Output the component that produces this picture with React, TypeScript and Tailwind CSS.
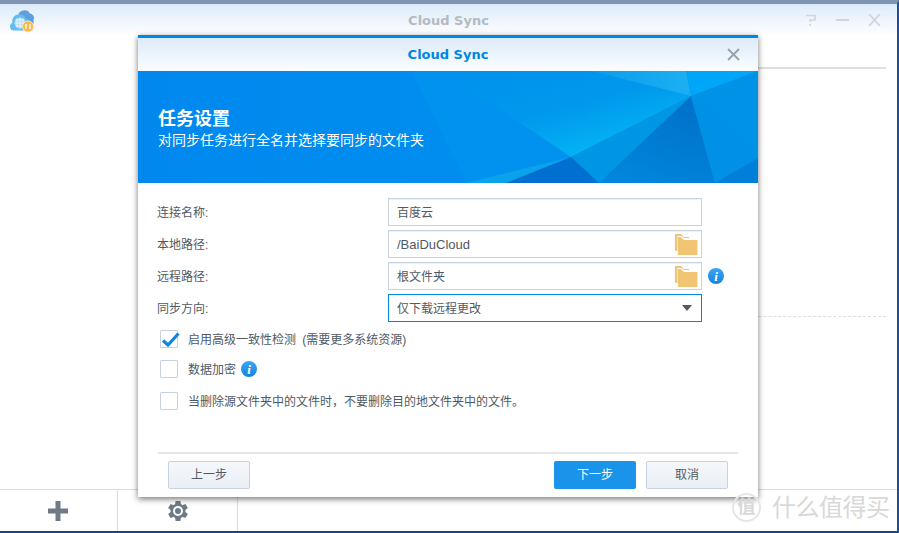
import clsx from 'clsx'

const cjk = "font-['Liberation_Sans','Noto_Sans_CJK_SC',sans-serif]"

function FolderIcon() {
  return (
    <svg width="23" height="21" viewBox="0 0 23 21" className="shrink-0">
      <path d="M0 0h6l3 3h5v1H9L6.500 2H2.500v15H0z" fill="#f0c674" />
      <path d="M3 3h3l3 3h13.500v15H3z" fill="#f0c674" />
    </svg>
  )
}

function InfoIcon() {
  return (
    <span className="flex h-4 w-4 shrink-0 items-center justify-center rounded-full bg-gradient-to-b from-[#3aa5f5] to-[#1583dd] font-['Liberation_Serif',serif] text-[13px] leading-none font-bold text-white italic">
      i
    </span>
  )
}

function GearIcon() {
  return (
    <svg width="20" height="20" viewBox="0 0 20 20" fill="#6e7b87">
      {[0, 60, 120, 180, 240, 300].map((deg) => (
        <path key={deg} d="M7.600 0h4.800l.6 4h-6z" transform={`rotate(${deg} 10 10)`} />
      ))}
      <circle cx="10" cy="10" r="7.500" />
      <circle cx="10" cy="10" r="5" fill="#fff" />
      <circle cx="10" cy="10" r="3" />
    </svg>
  )
}

function Field({ label, value, folder, info, valueClass }: { label: string; value: string; folder?: boolean; info?: boolean; valueClass?: string }) {
  return (
    <div className="flex h-7 items-center">
      <span className="w-[231px] shrink-0 pt-px text-xs text-[#505a64]">{label}</span>
      <div className="flex h-7 w-[314px] shrink-0 items-center justify-between border border-[#c7d2e0] pr-[3px] pl-2 text-xs text-[#505a64] shadow-[inset_0_1px_0_#eef2f7]">
        <span className={clsx('pt-px', valueClass)}>{value}</span>
        {folder && <FolderIcon />}
      </div>
      {info && (
        <span className="ml-[6px]">
          <InfoIcon />
        </span>
      )}
    </div>
  )
}

function Check({ label, checked, info }: { label: string; checked?: boolean; info?: boolean }) {
  return (
    <div className="flex h-[18px] items-center">
      <span className="relative h-[18px] w-[18px] shrink-0 rounded-[1px] border border-[#c7d2e0] bg-white">
        {checked && (
          <svg width="20" height="18" viewBox="0 0 20 18" className="absolute top-0 left-0">
            <path d="M2 9.500l5 4.500L17.500 2.500" fill="none" stroke="#0f86e0" strokeWidth="3.200" />
          </svg>
        )}
      </span>
      <span className="ml-[10px] pt-px text-xs text-[#505a64] [word-spacing:3px]">{label}</span>
      {info && (
        <span className="ml-[5px]">
          <InfoIcon />
        </span>
      )}
    </div>
  )
}

function Banner() {
  return (
    <div className="relative h-28 shrink-0 bg-gradient-to-r from-[#0088ee] to-[#0092ee]">
      <svg width="620" height="112" viewBox="0 0 620 112" className="absolute inset-0">
        <defs>
          <linearGradient id="lit" x1="0.100" y1="0" x2="0.800" y2="0.900">
            <stop offset="0" stopColor="#0092ee" />
            <stop offset="0.500" stopColor="#0098ec" />
            <stop offset="1" stopColor="#04b8f6" />
          </linearGradient>
          <linearGradient id="top" x1="0" y1="0" x2="1" y2="0">
            <stop offset="0" stopColor="#0a9cec" />
            <stop offset="1" stopColor="#1cb0f2" />
          </linearGradient>
          <linearGradient id="dark" x1="0.800" y1="0" x2="0.300" y2="1">
            <stop offset="0" stopColor="#0070c8" />
            <stop offset="1" stopColor="#0086dc" />
          </linearGradient>
        </defs>
        <path d="M273 0H620V112H328z" fill="#0092ee" />
        <path d="M305 0H453L553 25 433 86z" fill="url(#lit)" />
        <path d="M453 0H548L553 25z" fill="url(#top)" />
        <path d="M548 0H620L553 25z" fill="#00a6f8" />
        <path d="M553 25L620 0V87z" fill="#0092e6" />
        <path d="M328 112L433 86 368 112z" fill="#0aa2ea" />
        <path d="M433 86L553 25 461 112z" fill="#0096e6" />
        <path d="M553 25L461 112H577z" fill="url(#dark)" />
        <path d="M553 25L620 87 577 112z" fill="#0090e6" />
        <path d="M577 112L620 87V112z" fill="#007fd8" />
        <path d="M433 86L461 112H368z" fill="#0070d0" />
      </svg>
      <div className="relative pt-[37px] pl-5 text-white">
        <div className="text-[18px] leading-[23px] font-bold">任务设置</div>
        <div className="text-[14px] leading-[18px]">对同步任务进行全名并选择要同步的文件夹</div>
      </div>
    </div>
  )
}

function Dialog() {
  return (
    <div className="absolute top-[31px] left-[138px] flex h-[462px] w-[620px] flex-col border-t-[3px] border-[#0086e5] bg-white shadow-[0_2px_6px_rgba(0,0,0,0.55)]">
      <div className="relative flex h-[33px] shrink-0 items-center justify-center bg-gradient-to-b from-[#dcebf9] to-[#fbfdff]">
        <span className="font-['DejaVu_Sans',sans-serif] text-[13px] font-bold text-[#0086e5]">Cloud Sync</span>
        <svg width="13" height="13" viewBox="0 0 13 13" className="absolute top-[10px] right-[18px]">
          <path d="M1 1l11 11M12 1L1 12" stroke="#9aa3ad" strokeWidth="2" />
        </svg>
      </div>
      <Banner />
      <div className="flex flex-1 flex-col pt-[15px] pl-[19px]">
        <div className="flex flex-col gap-1">
          <Field label="连接名称:" value="百度云" />
          <Field label="本地路径:" value="/BaiDuCloud" folder valueClass="text-[13px]" />
          <Field label="远程路径:" value="根文件夹" folder info />
          <div className="flex h-7 items-center">
            <span className="w-[231px] shrink-0 pt-px text-xs text-[#505a64]">同步方向:</span>
            <div className="flex h-7 w-[314px] items-center justify-between border border-[#0086e5] pr-[9px] pl-2 text-xs text-[#505a64]">
              <span className="pt-px">仅下载远程更改</span>
              <span className="h-0 w-0 border-x-[5px] border-t-[6px] border-x-transparent border-t-[#505a64]" />
            </div>
          </div>
        </div>
        <div className="mt-2 flex flex-col gap-3 pl-[3px]">
          <Check label="启用高级一致性检测 (需要更多系统资源)" checked />
          <Check label="数据加密" info />
          <div className="mt-[2px]">
            <Check label={'当删除源文件夹中的文件时\uFF0C不要删除目的地文件夹中的文件。'} />
          </div>
        </div>
      </div>
      <div className="mx-5 flex h-[45px] shrink-0 items-start justify-between border-t-2 border-[#e6e6e6] px-[10px] pt-[7px]">
        <button className="h-7 w-[82px] rounded-[2px] border border-[#c7d2e0] bg-gradient-to-b from-[#f5f8fb] to-[#e9eff5] text-xs text-[#505a64]">
          上一步
        </button>
        <div className="flex gap-[10px]">
          <button className="h-7 w-[82px] rounded-[2px] bg-[#1a94ea] text-xs text-white">下一步</button>
          <button className="h-7 w-[82px] rounded-[2px] border border-[#c7d2e0] bg-gradient-to-b from-[#f5f8fb] to-[#e9eff5] text-xs text-[#505a64]">
            取消
          </button>
        </div>
      </div>
    </div>
  )
}

function AppIcon() {
  return (
    <svg width="24" height="24" viewBox="0 0 24 24">
      <path d="M8 7a6.500 6.500 0 0 1 12-2.500 4.500 4.500 0 0 1 3.500 6.500V15H10z" fill="#5f9fdc" />
      <path d="M4 21.500a4 4 0 0 1-1.500-7.700A6.500 6.500 0 0 1 9 5.500a6.500 6.500 0 0 1 7 4.500 5 5 0 0 1 3 9l-2 2.500z" fill="#63bdf4" />
      <circle cx="10" cy="14" r="5.500" fill="#a8dcfa" />
      <path d="M4.500 14h11M10 8.500v11M7 9.500v9M13 9.500v9M5.500 11h9M5.500 17h9" stroke="#fff" strokeWidth="0.700" />
      <circle cx="18" cy="17.500" r="5.500" fill="#f9b94a" stroke="#fde3b0" />
      <path d="M16 15v5M15 16h2M20 20v-5M19 19h2" stroke="#fff" strokeWidth="1.100" />
    </svg>
  )
}

function Watermark() {
  return (
    <div className="absolute top-[489px] left-[732px] flex items-center gap-[11px] text-[#d8d8d8]">
      <span className="flex h-[29px] w-[29px] items-center justify-center rounded-full border-2 border-[#e6e6e6] text-[18px] font-bold">值</span>
      <span className="text-[24px] leading-none tracking-[-0.5px] whitespace-nowrap">什么值得买</span>
    </div>
  )
}

export default function App() {
  return (
    <div className={`relative flex h-[533px] w-[899px] flex-col overflow-hidden border-t-4 border-r-2 border-b-2 border-t-[#7f93b3] border-r-[#1a4f9c] border-b-[#14468f] bg-white ${cjk}`}>
      {/* window title bar */}
      <div className="relative flex h-8 shrink-0 items-center justify-center bg-gradient-to-b from-[#dcebf9] to-white">
        <span className="absolute top-[5px] left-[10px]">
          <AppIcon />
        </span>
        <span className="pt-[2px] font-['DejaVu_Sans',sans-serif] text-[13px] font-bold text-[#b4bac2]">Cloud Sync</span>
        <div className="absolute top-[10px] right-[16px] flex items-center gap-[19px]">
          <svg width="12" height="12" viewBox="0 0 12 12">
            <path d="M1 1.500h9v4.500H5v2M5 10v2" fill="none" stroke="#d0d5db" strokeWidth="1.600" />
          </svg>
          <svg width="13" height="12" viewBox="0 0 13 12">
            <path d="M0 6h13" stroke="#d0d5db" strokeWidth="2" />
          </svg>
          <svg width="13" height="12" viewBox="0 0 13 12">
            <path d="M1 0l11 12M12 0L1 12" stroke="#d0d5db" strokeWidth="1.800" />
          </svg>
        </div>
      </div>
      <div className="flex-1">
        <div className="mt-[31px] mr-[11px] ml-[200px] h-[249px] border-t-2 border-[#dcdfe3]" />
        <div className="mr-[11px] ml-[200px] border-t border-dashed border-[#dcdfe3]" />
      </div>
      {/* bottom toolbar */}
      <div className="flex h-[42px] shrink-0 border-t border-[#d5dee8]">
        <div className="flex w-[118px] items-center justify-center border-r border-[#d5dee8] pr-px">
          <svg width="20" height="20" viewBox="0 0 20 20">
            <path d="M10 0v20M0 10h20" stroke="#6e7b87" strokeWidth="5" />
          </svg>
        </div>
        <div className="flex w-[120px] items-center justify-center border-r border-[#d5dee8]">
          <GearIcon />
        </div>
      </div>
      <Dialog />
      <Watermark />
    </div>
  )
}
